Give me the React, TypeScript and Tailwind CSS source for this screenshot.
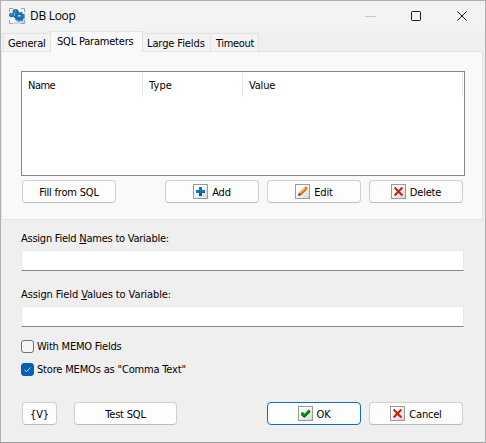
import React, { useState } from "react";
import clsx from "clsx";

const IconBox = ({ children }: { children: React.ReactNode }) => (
  <svg width="15" height="15" viewBox="0 0 15 15" className="shrink-0" shapeRendering="crispEdges">
    <defs>
      <linearGradient id="box" x1="0" y1="0" x2="1" y2="1">
        <stop offset="0.3" stopColor="#ffffff" />
        <stop offset="1" stopColor="#d2d4d8" />
      </linearGradient>
    </defs>
    <rect x="0.5" y="0.5" width="14" height="14" fill="url(#box)" stroke="#999a9c" />
    <g shapeRendering="geometricPrecision">{children}</g>
  </svg>
);

const PlusIcon = () => (
  <IconBox>
    <path d="M6 3h3v3h3v3H9v3H6V9H3V6h3z" fill="#0f74ba" />
    <path d="M6 9h3v3H6zM9 8h3v1H9z" fill="#075592" />
  </IconBox>
);

const PencilIcon = () => (
  <IconBox>
    <path d="M3 12l1-3.5 2.5 2.5z" fill="#3b2a20" />
    <path d="M4 8.8L9.6 3.2l2.4 2.2-5.7 5.8z" fill="#f6a11c" />
    <path d="M5.6 10.8L11.6 5" stroke="#a8480c" strokeWidth="1" />
    <path d="M4.8 8.8l5-5" stroke="#ffd66a" strokeWidth="0.9" />
    <path d="M9.6 3.2l1-.7 2 2-.8 1z" fill="#c84a1c" />
  </IconBox>
);

const CrossIcon = () => (
  <IconBox>
    <path d="M3.6 3.6l7.8 7.8M11.4 3.6l-7.8 7.8" stroke="#cb2208" strokeWidth="2.1" />
  </IconBox>
);

const CheckIcon = () => (
  <IconBox>
    <path d="M3 7.2l1.6-1.4 2 2 4-4.4 1.6 1.2v1.6L7 11.4H5.8L3 8.6z" fill="#0c8a12" />
    <path d="M3.3 9L6.3 11 12 5.6" fill="none" stroke="#075f0b" strokeWidth="0.9" />
  </IconBox>
);

const GearsIcon = () => (
  <svg width="16" height="16" viewBox="0 0 16 16">
    <rect width="16" height="16" fill="#fafcfe" />
    <path d="M4 16L16 4v12z" fill="#c3dbed" />
    <path d="M.5 4V.5H4M12 .5h3.5V4M.5 12v3.5H4M12 15.5h3.5V12" fill="none" stroke="#96a2ab" />
    <ellipse cx="10.3" cy="8.6" rx="4.6" ry="4" fill="#1771ab" />
    <ellipse cx="10.3" cy="8.6" rx="4.9" ry="4.3" fill="none" stroke="#1771ab" strokeWidth="1.2" strokeDasharray="2 1.2" />
    <ellipse cx="10.3" cy="8" rx="1.6" ry="1.1" fill="#e4f0f8" />
    <ellipse cx="10.3" cy="8.2" rx=".7" ry=".5" fill="#1771ab" />
    <ellipse cx="2.8" cy="7" rx="2.7" ry="2.2" fill="#1771ab" />
    <ellipse cx="6.5" cy="3.2" rx="3" ry="2.2" fill="#1771ab" />
    <circle cx="2.8" cy="6.7" r=".6" fill="#b7d7ea" />
    <circle cx="6.5" cy="3" r=".6" fill="#b7d7ea" />
  </svg>
);

type ButtonProps = {
  children: React.ReactNode;
  className?: string;
  icon?: React.ReactNode;
  primary?: boolean;
};

const Button = ({ children, className, icon, primary }: ButtonProps) => (
  <button
    className={clsx(
      "flex h-[23px] items-center justify-center gap-1 rounded-[4px] border bg-[#fdfdfd]",
      primary ? "border-[#0a6fc2]" : "border-[#d0d0d0] border-b-[#bcbcbc]",
      className,
    )}
  >
    {icon}
    <span className="pt-[2px]">{children}</span>
  </button>
);

const Checkbox = ({ label, initial, className }: { label: string; initial: boolean; className?: string }) => {
  const [checked, setChecked] = useState(initial);
  return (
    <div className="flex h-[13px] cursor-default items-center gap-[3px]" onClick={() => setChecked(!checked)}>
      <div
        className={clsx(
          "flex size-[13px] items-center justify-center rounded-[3px] border",
          checked ? "border-[#005fb8] bg-[#005fb8]" : "border-[#707070] bg-[#f6f6f6]",
        )}
      >
        {checked && (
          <svg width="9" height="9" viewBox="0 0 9 9" fill="none" stroke="#c9e0f5">
            <path d="M1.5 4.8l2 2L7.5 2.5" />
          </svg>
        )}
      </div>
      <span className={clsx("pt-px", className)}>{label}</span>
    </div>
  );
};

const App = () => {
  return (
    <div className="flex h-[443px] w-[486px] flex-col border border-[#b0b0b0] border-b-[#a0a0a0] bg-[#efefef] font-['DejaVu_Sans_Condensed','DejaVu_Sans',sans-serif] font-stretch-condensed text-[11px] leading-[14px] tracking-[-0.2px] whitespace-nowrap text-black">
      {/* TITLE BAR */}
      <div className="flex h-[30px] shrink-0 items-center bg-[#f3f3f3] pl-2">
        <GearsIcon />
        <span className="ml-[5px] font-['Open_Sans',sans-serif] text-[12px] font-stretch-normal tracking-[-0.3px]">DB Loop</span>
        <svg width="104" height="12" viewBox="0 0 104 12" fill="none" className="mr-[17px] ml-auto">
          <path d="M1 6.5h11" stroke="#c6c6c6" />
          <rect x="47.5" y="1.5" width="9" height="9" rx="1" stroke="#111" />
          <path d="M93.5 1.5l9 9M102.5 1.5l-9 9" stroke="#111" />
        </svg>
      </div>
      {/* TABS */}
      <div className="flex h-[20px] shrink-0 items-end pl-[2px]">
        <div className="h-[18px] w-[47px] border-t border-l border-[#e3e3e3] bg-[#f3f3f3] pt-[3px] pl-1">General</div>
        <div className="z-10 -mb-px h-[21px] w-[93px] border border-b-0 border-[#e3e3e3] bg-[#f9f9f9] pt-[3px] pl-[6px]">SQL Parameters</div>
        <div className="h-[18px] w-[67px] border-t border-[#e3e3e3] bg-[#f3f3f3] pt-[3px] pl-1 tracking-[-0.1px]">Large Fields</div>
        <div className="h-[18px] w-[49px] border border-b-0 border-[#e3e3e3] bg-[#f3f3f3] pt-[3px] pl-[5px] tracking-[-0.35px]">Timeout</div>
      </div>
      {/* TAB PAGE */}
      <div className="mr-[2px] h-[169px] shrink-0 border border-[#e3e3e3] bg-[#f9f9f9] pt-[19px] pl-[19px]">
        <div className="h-[105px] w-[444px] border border-[#828790] bg-white pt-px">
          <div className="flex h-[24px] items-center">
            <div className="flex h-full w-[121px] items-center border-r border-[#e5e5e5] pt-[2px] pl-[6px] tracking-[-0.5px]">Name</div>
            <div className="flex h-full w-[100px] items-center border-r border-[#e5e5e5] pt-[2px] pl-[6px] tracking-[0.1px]">Type</div>
            <div className="flex h-full w-[220px] items-center border-r border-[#e5e5e5] pt-[2px] pl-[6px]">Value</div>
          </div>
        </div>
        <div className="mt-1 ml-px flex">
          <Button className="w-[94px]">Fill from SQL</Button>
          <Button className="ml-[49px] w-[94px]" icon={<PlusIcon />}>Add</Button>
          <Button className="ml-2 w-[94px]" icon={<PencilIcon />}>Edit</Button>
          <Button className="ml-2 w-[94px]" icon={<CrossIcon />}>Delete</Button>
        </div>
      </div>
      {/* FIELDS */}
      <div className="flex flex-col pt-3 pl-5">
        <div className="tracking-[-0.24px]">Assign Field <u>N</u>ames to Variable:</div>
        <input className="mt-1 h-[21px] w-[443px] border border-[#e8e8e8] border-b-[#868686] bg-white px-1 outline-none" />
        <div className="mt-[17px] tracking-[-0.1px]">Assign Field <u>V</u>alues to Variable:</div>
        <input className="mt-1 h-[21px] w-[443px] border border-[#e8e8e8] border-b-[#868686] bg-white px-1 outline-none" />
        <div className="mt-[13px] flex flex-col gap-[10px]">
          <Checkbox label="With MEMO Fields" initial={false} />
          <Checkbox label={'Store MEMOs as "Comma Text"'} initial={true} className="tracking-[-0.17px]" />
        </div>
      </div>
      {/* FOOTER */}
      <div className="mt-[26px] flex pl-[21px]">
        <Button className="w-[35px]">{"{V}"}</Button>
        <Button className="ml-[17px] w-[103px]">Test SQL</Button>
        <Button className="ml-[90px] w-[94px]" icon={<CheckIcon />} primary>OK</Button>
        <Button className="ml-2 w-[94px]" icon={<CrossIcon />}>Cancel</Button>
      </div>
    </div>
  );
};

export default App;
